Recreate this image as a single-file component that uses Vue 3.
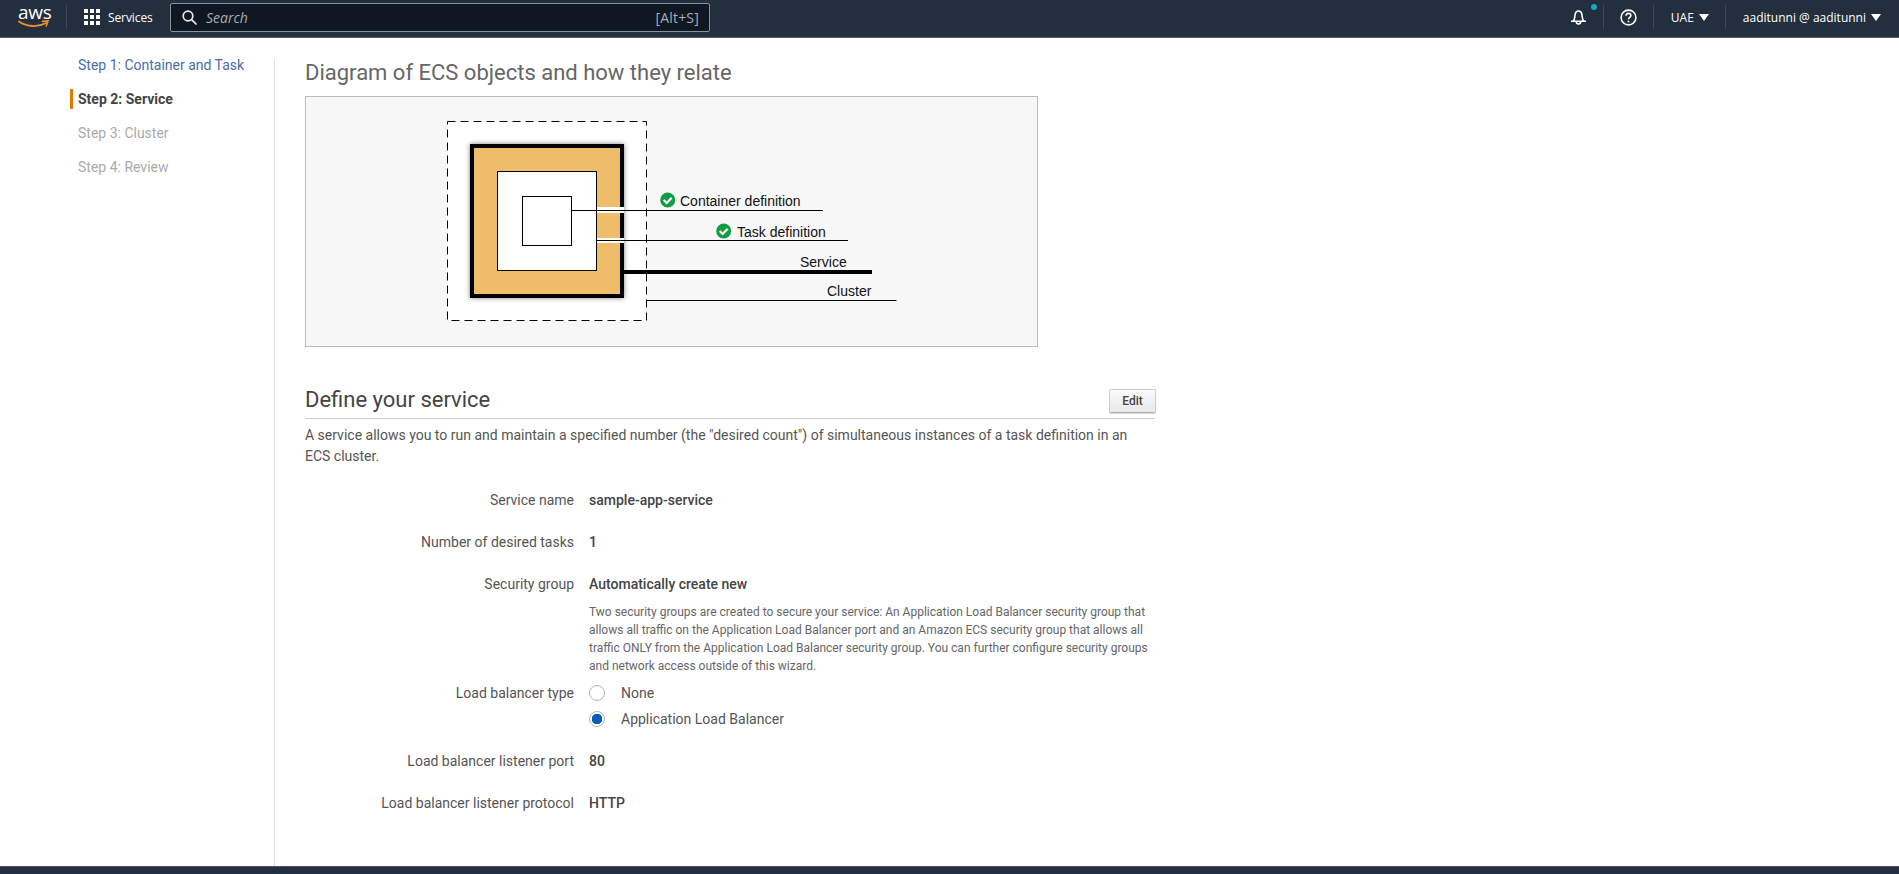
<script setup>
const steps = [
  { label: 'Step 1: Container and Task', state: 'done' },
  { label: 'Step 2: Service', state: 'active' },
  { label: 'Step 3: Cluster', state: 'todo' },
  { label: 'Step 4: Review', state: 'todo' }
]
</script>

<template>
  <div class="page">
    <header class="topbar">
      <div class="logo">
        <span class="logo-word">aws</span>
        <svg class="smile" width="32" height="9" viewBox="0 0 32 9">
          <path d="M1 1.5C9 7 20 7.5 28 3" fill="none" stroke="#ec912d" stroke-width="1.8" stroke-linecap="round" />
          <path d="M24.5 1.4L30 1l-1.7 5" fill="none" stroke="#ec912d" stroke-width="1.6" stroke-linecap="round" />
        </svg>
      </div>
      <span class="sep"></span>
      <svg class="grid-icon" width="16" height="16" viewBox="0 0 16 16" fill="#fff">
        <rect x="0" y="0" width="4" height="4" /><rect x="6" y="0" width="4" height="4" /><rect x="12" y="0" width="4" height="4" />
        <rect x="0" y="6" width="4" height="4" /><rect x="6" y="6" width="4" height="4" /><rect x="12" y="6" width="4" height="4" />
        <rect x="0" y="12" width="4" height="4" /><rect x="6" y="12" width="4" height="4" /><rect x="12" y="12" width="4" height="4" />
      </svg>
      <span class="services">Services</span>
      <div class="search">
        <svg width="15" height="15" viewBox="0 0 15 15" fill="none" stroke="#e8eaea" stroke-width="1.7">
          <circle cx="6" cy="6" r="4.8" /><path d="M9.6 9.6l4.4 4.4" stroke-linecap="round" />
        </svg>
        <span class="search-text">Search</span>
        <span class="shortcut">[Alt+S]</span>
      </div>
      <div class="top-right">
        <span class="bell-wrap">
          <svg width="17" height="16" viewBox="0 0 17 16" fill="none" stroke="#fff" stroke-width="1.6">
            <path d="M1 12.3h15M3.2 12.3c1.5-1.6 1.4-3.4 1.7-5.6C5.2 4 6.5 2 8.5 2s3.3 2 3.6 4.7c.3 2.2.2 4 1.7 5.6" />
            <path d="M6.3 12.6c0 1.5 1 2.4 2.2 2.4s2.2-.9 2.2-2.4" />
          </svg>
          <i class="dot"></i>
        </span>
        <span class="sep"></span>
        <svg class="help" width="17" height="17" viewBox="0 0 17 17" fill="none" stroke="#fff">
          <circle cx="8.5" cy="8.5" r="7.4" stroke-width="1.6" />
          <path d="M6.1 6.7c0-1.5 1-2.3 2.4-2.3s2.4.8 2.4 2.1c0 1.9-2.4 1.8-2.4 3.7" stroke-width="1.6" />
          <circle cx="8.5" cy="12.4" r="1" fill="#fff" stroke="none" />
        </svg>
        <span class="sep"></span>
        <span class="menu region">UAE<i class="caret"></i></span>
        <span class="sep"></span>
        <span class="menu user">aaditunni @ aaditunni<i class="caret"></i></span>
      </div>
    </header>

    <div class="body">
      <nav class="steps">
        <a v-for="s in steps" :key="s.label" class="step" :class="s.state">{{ s.label }}</a>
      </nav>

      <main class="content">
        <h2 class="diagram-title">Diagram of ECS objects and how they relate</h2>
        <div class="diagram">
          <svg width="731" height="249" viewBox="0 0 731 249">
            <defs>
              <filter id="soft" x="-10%" y="-10%" width="120%" height="120%">
                <feDropShadow dx="0" dy="0" stdDeviation="2.500" flood-color="#000" flood-opacity="0.5" />
              </filter>
            </defs>
            <rect x="141.500" y="24.500" width="199" height="199" fill="#fff" stroke="#000" stroke-dasharray="8 5" />
            <rect x="166" y="49" width="150" height="150" fill="#efbc6b" stroke="#000" stroke-width="4" filter="url(#soft)" />
            <rect x="191.500" y="74.500" width="99" height="99" fill="#fff" stroke="#000" />
            <rect x="216.500" y="99.500" width="49" height="49" fill="#fff" stroke="#000" />
            <rect x="291" y="110" width="27" height="6" fill="#fff" />
            <rect x="291" y="141" width="27" height="5" fill="#fff" />
            <path d="M266 113.500h251M291 143.500h251" stroke="#000" fill="none" />
            <rect x="318" y="173" width="248" height="4" fill="#000" />
            <path d="M340.500 203.500h250" stroke="#000" fill="none" />
            <g>
              <circle cx="361.700" cy="103" r="7.500" fill="#119c44" />
              <path d="M357.700 103l3 3 5-5.200" fill="none" stroke="#fff" stroke-width="2.200" />
              <circle cx="417.700" cy="134" r="7.500" fill="#119c44" />
              <path d="M413.700 134l3 3 5-5.200" fill="none" stroke="#fff" stroke-width="2.200" />
            </g>
            <text x="374" y="109" class="dlabel">Container definition</text>
            <text x="431" y="139.500" class="dlabel">Task definition</text>
            <text x="494" y="169.500" class="dlabel">Service</text>
            <text x="521" y="199" class="dlabel">Cluster</text>
          </svg>
        </div>

        <div class="section-head">
          <h2 class="section-title">Define your service</h2>
          <button class="edit" type="button">Edit</button>
        </div>
        <p class="intro">A service allows you to run and maintain a specified number (the "desired count") of simultaneous instances of a task definition in an ECS cluster.</p>

        <div class="form">
          <div class="row">
            <div class="label">Service name</div>
            <div class="value">sample-app-service</div>
          </div>
          <div class="row">
            <div class="label">Number of desired tasks</div>
            <div class="value">1</div>
          </div>
          <div class="row sg">
            <div class="label">Security group</div>
            <div class="value">
              Automatically create new
              <p class="hint">Two security groups are created to secure your service: An Application Load Balancer security group that allows all traffic on the Application Load Balancer port and an Amazon ECS security group that allows all traffic ONLY from the Application Load Balancer security group. You can further configure security groups and network access outside of this wizard.</p>
            </div>
          </div>
          <div class="row lb">
            <div class="label">Load balancer type</div>
            <div class="radios">
              <label class="radio"><i class="circle"></i>None</label>
              <label class="radio"><i class="circle on"></i>Application Load Balancer</label>
            </div>
          </div>
          <div class="row">
            <div class="label">Load balancer listener port</div>
            <div class="value">80</div>
          </div>
          <div class="row">
            <div class="label">Load balancer listener protocol</div>
            <div class="value">HTTP</div>
          </div>
        </div>
      </main>
    </div>

    <footer class="foot"></footer>
  </div>
</template>

<style scoped>
.page {
  height: 874px;
  display: flex;
  flex-direction: column;
  overflow: hidden;
  font-family: Roboto, "Liberation Sans", sans-serif;
  color: #444;
  background: #fff;
}
.topbar {
  flex: none;
  height: 38px;
  box-sizing: border-box;
  display: flex;
  align-items: center;
  background: #232f3e;
  border-bottom: 1px solid #5a6470;
  padding: 0 0 3px 18px;
  font-family: "Open Sans", "Noto Sans", sans-serif;
  color: #fff;
}
.logo {
  width: 32px;
  height: 28px;
  position: relative;
}
.logo-word {
  display: block;
  margin-top: -1px;
  font-family: "Open Sans", sans-serif;
  font-size: 19px;
  line-height: 20px;
  letter-spacing: -0.3px;
  color: #fff;
}
.smile {
  position: absolute;
  left: 0;
  top: 17px;
}
.sep {
  flex: none;
  width: 1px;
  height: 24px;
  background: #3c4857;
}
.logo + .sep {
  margin-left: 16px;
  margin-right: 17px;
}
.services {
  font-size: 12px;
  font-weight: 500;
  letter-spacing: -0.1px;
  margin-left: 8px;
  width: 46px;
}
.search {
  box-sizing: border-box;
  width: 540px;
  height: 29px;
  margin-left: 16px;
  display: flex;
  align-items: center;
  padding: 0 10px 0 11px;
  background: #0f1722;
  border: 1px solid #87949f;
  border-radius: 2px;
}
.search-text {
  margin-left: 9px;
  font-size: 14px;
  font-style: italic;
  color: #a6adb4;
}
.shortcut {
  margin-left: auto;
  font-size: 14px;
  letter-spacing: 0.2px;
  color: #a6adb4;
}
.top-right {
  margin-left: auto;
  display: flex;
  align-items: center;
}
.bell-wrap {
  position: relative;
  display: flex;
}
.dot {
  position: absolute;
  left: 21px;
  top: -5px;
  width: 6px;
  height: 6px;
  border-radius: 50%;
  background: #1ba5c8;
}
.bell-wrap + .sep {
  margin-left: 16px;
  margin-right: 16px;
}
.help + .sep {
  margin-left: 16px;
  margin-right: 17px;
}
.menu {
  font-size: 12px;
  font-weight: 500;
  display: flex;
  align-items: center;
  white-space: nowrap;
}
.region + .sep {
  margin-left: 16px;
  margin-right: 17px;
}
.user {
  margin-right: 18px;
}
.caret {
  display: inline-block;
  margin-left: 5px;
  border-left: 5px solid transparent;
  border-right: 5px solid transparent;
  border-top: 7px solid #fff;
}
.body {
  flex: 1;
  min-height: 0;
  display: flex;
}
.steps {
  flex: none;
  width: 274px;
  box-sizing: border-box;
  padding: 17px 0 0 70px;
  display: flex;
  flex-direction: column;
  gap: 14px;
}
.step {
  height: 20px;
  line-height: 20px;
  padding-left: 5px;
  font-size: 14px;
  border-left: 3px solid transparent;
}
.step.done { color: #4a6da7; }
.step.active {
  font-weight: 700;
  color: #444;
  border-left-color: #e07b00;
}
.step.todo { color: #aaa; }
.content {
  flex: 1;
  margin-top: 21px;
  padding: 0 0 0 30px;
  border-left: 1px solid #ddd;
}
.diagram-title {
  margin: 0;
  font-size: 22px;
  line-height: 28px;
  font-weight: 400;
  color: #666;
}
.diagram {
  box-sizing: border-box;
  width: 733px;
  height: 251px;
  margin-top: 9px;
  background: #f7f7f7;
  border: 1px solid #bbb;
}
.diagram svg { display: block; }
.dlabel {
  font-family: "Liberation Sans", Arial, sans-serif;
  font-size: 14px;
  fill: #111;
}
.section-head {
  box-sizing: border-box;
  width: 850px;
  height: 37px;
  margin-top: 35px;
  display: flex;
  align-items: flex-start;
  justify-content: space-between;
  border-bottom: 1px solid #ccc;
}
.section-title {
  margin: 4px 0 0;
  font-size: 22px;
  line-height: 28px;
  font-weight: 400;
  color: #444;
}
.edit {
  box-sizing: border-box;
  width: 47px;
  height: 24px;
  margin-top: 7px;
  margin-right: -1px;
  padding: 0;
  font-family: Roboto, sans-serif;
  font-size: 12px;
  font-weight: 500;
  color: #444;
  border: 1px solid #ccc;
  border-bottom-color: #aaa;
  border-radius: 2px;
  background: linear-gradient(#fafafa, #e9e9e9);
  box-shadow: 0 1px 1px rgba(0, 0, 0, 0.15);
}
.intro {
  width: 851px;
  margin: 6px 0 0;
  font-size: 14px;
  line-height: 21px;
  color: #555;
}
.form {
  width: 851px;
  margin-top: 23px;
}
.row {
  display: flex;
  min-height: 42px;
  align-items: flex-start;
}
.label {
  flex: none;
  width: 269px;
  text-align: right;
  font-size: 14px;
  line-height: 20px;
  color: #555;
}
.value {
  margin-left: 15px;
  font-size: 14px;
  line-height: 20px;
  font-weight: 500;
  color: #444;
}
.hint {
  margin: 9px 0 0;
  font-size: 12px;
  line-height: 18px;
  font-weight: 400;
  color: #666;
}
.row.sg { min-height: 0; }
.radios {
  margin-left: 15px;
  display: flex;
  flex-direction: column;
  gap: 6px;
}
.row.lb {
  min-height: 0;
  margin-top: 8px;
  margin-bottom: 22px;
}
.radio {
  display: flex;
  align-items: center;
  height: 20px;
  font-size: 14px;
  color: #555;
}
.circle {
  box-sizing: border-box;
  width: 16px;
  height: 16px;
  margin-right: 16px;
  border-radius: 50%;
  border: 1px solid #aab7b8;
  background: #fff;
}
.circle.on {
  border: 1px solid #aab7cc;
  background: radial-gradient(circle, #0a5cb8 0 5px, #fff 5.5px);
}
.foot {
  flex: none;
  height: 8px;
  background: #232f3e;
  border-top: 1px solid #4a5561;
  box-sizing: border-box;
}
</style>
